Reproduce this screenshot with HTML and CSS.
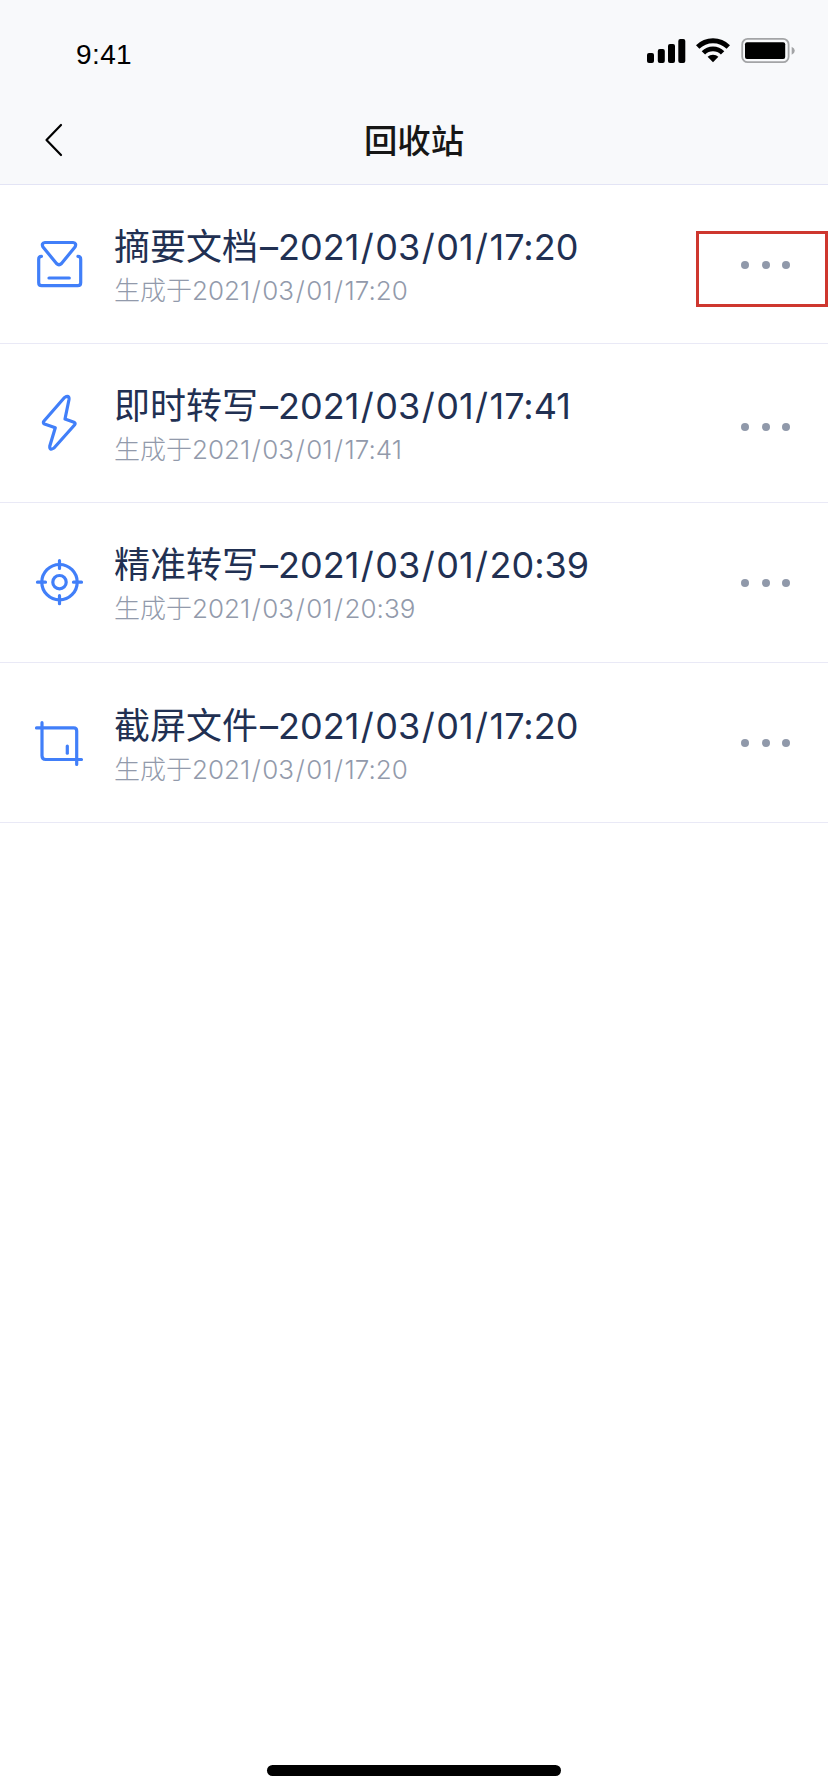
FILE: index.html
```html
<!DOCTYPE html>
<html lang="zh-CN">
<head>
    <meta charset="UTF-8">
    <meta name="viewport" content="width=device-width, initial-scale=1.0">
    <title>回收站</title>
    <link rel="stylesheet" href="styles.css">
</head>
<body>
    <header class="header">
        <div class="status-bar">
            <span class="time">9:41</span>
            <svg class="status-icons" viewBox="0 0 160 40">
                <rect x="7" y="23" width="7" height="10" rx="2"/>
                <rect x="17.8" y="19" width="7" height="14" rx="2"/>
                <rect x="28" y="14" width="7" height="19" rx="2"/>
                <rect x="38.3" y="9" width="7" height="24" rx="2"/>
                <g fill="none" stroke="#000" stroke-width="4.8">
                    <path d="M57.7 17A21.8 21.8 0 0 1 88.3 17"/>
                    <path d="M63.4 22.9A13.6 13.6 0 0 1 82.6 22.9"/>
                </g>
                <path d="M67.6 26.8A7.8 7.8 0 0 1 78.4 26.8L73 32.3Z"/>
                <rect x="102.2" y="8.9" width="46.4" height="23.3" rx="5.5" fill="none" stroke="#a3a4a6" stroke-width="1.8"/>
                <rect x="105" y="12.3" width="40.2" height="16.8" rx="2"/>
                <path d="M151.7 16.7Q154.8 18.2 154.8 20.7T151.7 24.7Z" fill="#a3a4a6"/>
            </svg>
        </div>
        <div class="nav-bar">
            <a href="#" class="back" aria-label="返回">
                <svg viewBox="0 0 20 34"><path d="M17 2L2.5 17L17 32"/></svg>
            </a>
            <h1>回收站</h1>
        </div>
    </header>

    <main class="file-list">
        <div class="file-item">
            <svg class="file-icon" viewBox="0 0 60 60">
                <path d="M15 8.5H43Q47 9 45 13L31.5 29.5Q29 32 26.5 29.5L13 13Q11 9 15 8.5Z"/>
                <path d="M11.5 22.3Q8.7 22.3 8.7 25.3V48.7Q8.7 51.7 11.7 51.7H47.7Q50.7 51.7 50.7 48.7V25.3Q50.7 22.3 47.9 22.3"/>
                <path d="M19 44H39.3"/>
            </svg>
            <div class="file-info">
                <p class="file-name">摘要文档<span>–2021<i>/</i>03<i>/</i>01<i>/</i>17:20</span></p>
                <p class="file-date">生成于<span>2021<i>/</i>03<i>/</i>01<i>/</i>17:20</span></p>
            </div>
            <button class="more highlight" aria-label="更多"><i></i><i></i><i></i></button>
        </div>
        <div class="file-item">
            <svg class="file-icon" viewBox="0 0 60 60">
                <path d="M34.5 4.5Q39.5 1.5 39 6.5L35 26L44 29.2Q46 30 44.5 32L24 55Q19.3 58 19.8 53L25.3 34.8L14.5 31Q12.5 30 14 28Z"/>
            </svg>
            <div class="file-info">
                <p class="file-name">即时转写<span>–2021<i>/</i>03<i>/</i>01<i>/</i>17:41</span></p>
                <p class="file-date">生成于<span>2021<i>/</i>03<i>/</i>01<i>/</i>17:41</span></p>
            </div>
            <button class="more more-low" aria-label="更多"><i></i><i></i><i></i></button>
        </div>
        <div class="file-item tall">
            <svg class="file-icon" viewBox="0 0 60 60">
                <circle cx="29.5" cy="29.2" r="17.7"/>
                <circle cx="29.5" cy="29.2" r="6.7"/>
                <path d="M29.5 7.7V15.5M29.5 42.7V50.7M7.5 29.2H15.5M43.5 29.2H51.5"/>
            </svg>
            <div class="file-info">
                <p class="file-name">精准转写<span>–2021<i>/</i>03<i>/</i>01<i>/</i>20:39</span></p>
                <p class="file-date">生成于<span>2021<i>/</i>03<i>/</i>01<i>/</i>20:39</span></p>
            </div>
            <button class="more" aria-label="更多"><i></i><i></i><i></i></button>
        </div>
        <div class="file-item tall last">
            <svg class="file-icon" viewBox="0 0 60 60">
                <path d="M6.5 14.9H43.7Q46.7 14.9 46.7 17.9V51.5"/>
                <path d="M12 9.7V42.7Q12 46.5 15.8 46.5H51.5"/>
                <path d="M37.3 33V40.2"/>
            </svg>
            <div class="file-info">
                <p class="file-name">截屏文件<span>–2021<i>/</i>03<i>/</i>01<i>/</i>17:20</span></p>
                <p class="file-date">生成于<span>2021<i>/</i>03<i>/</i>01<i>/</i>17:20</span></p>
            </div>
            <button class="more" aria-label="更多"><i></i><i></i><i></i></button>
        </div>
    </main>

    <div class="home-indicator"></div>
</body>
</html>
```
FILE: styles.css
```css
* {
    box-sizing: border-box;
}

body {
    font-family: Inter, "Noto Sans CJK SC", sans-serif;
    background-color: #fff;
    margin: 0;
    min-height: 1792px;
    display: flex;
    flex-direction: column;
}

h1, p {
    margin: 0;
}

.header {
    height: 185px;
    background-color: #f8f9fb;
    border-bottom: 1px solid #e3e4f5;
}

.status-bar {
    display: flex;
    justify-content: space-between;
    height: 95px;
    padding: 30px 28px 0 76px;
}

.time {
    font-family: "Liberation Sans", sans-serif;
    font-size: 28px;
    line-height: 49px;
    letter-spacing: 0.4px;
    color: #000;
}

.status-icons {
    width: 160px;
    height: 40px;
}

.nav-bar {
    display: grid;
    grid-template-columns: 100px 1fr 100px;
    align-items: center;
    height: 89px;
}

.back {
    display: flex;
    padding-left: 44px;
}

.back svg {
    width: 20px;
    height: 34px;
    fill: none;
    stroke: #000;
    stroke-width: 2.2;
    stroke-linecap: round;
    stroke-linejoin: round;
}

h1 {
    font-family: "Noto Sans CJK SC", sans-serif;
    font-size: 33.4px;
    font-weight: 500;
    line-height: 48px;
    padding-bottom: 2px;
    text-align: center;
    color: #161616;
}

.file-item {
    display: flex;
    align-items: center;
    height: 159px;
    padding-left: 30px;
    border-bottom: 1px solid #e9e9f6;
}

.file-item.tall {
    height: 160px;
}

.file-icon {
    width: 60px;
    height: 60px;
    fill: none;
    stroke: #417ff9;
    stroke-width: 3.2;
    stroke-linecap: round;
    stroke-linejoin: round;
}

.file-info {
    flex: 1;
    align-self: flex-start;
    padding: 34px 0 0 24px;
    white-space: nowrap;
}

.last .file-info {
    padding-top: 35px;
}

.file-name {
    font-family: "Noto Sans CJK SC", sans-serif;
    font-size: 36px;
    line-height: 50px;
    color: #213052;
}

.file-date {
    font-family: "Noto Sans CJK SC", sans-serif;
    font-size: 26px;
    font-weight: 300;
    line-height: 34px;
    color: #929aab;
}

.file-name span,
.file-date span {
    font-family: Inter, sans-serif;
    font-feature-settings: "calt" 0;
}

.file-name span {
    margin-left: 2px;
}

.file-name i,
.file-date i {
    font-style: normal;
    padding: 0 1.5px;
}

.more {
    display: flex;
    align-items: center;
    gap: 12.5px;
    width: 132px;
    height: 76px;
    padding: 0 0 0 45px;
    border: none;
    background: none;
}

.more i {
    width: 8px;
    height: 8px;
    border-radius: 50%;
    background-color: #9099aa;
}

.more-low {
    padding-top: 7px;
}

.highlight {
    align-self: flex-start;
    margin-top: 46px;
    padding: 0 0 9px 42px;
    border: 3px solid #ce372f;
}

.home-indicator {
    width: 294px;
    height: 11px;
    margin: auto auto 16px 267px;
    border-radius: 6px;
    background-color: #000;
}
```
